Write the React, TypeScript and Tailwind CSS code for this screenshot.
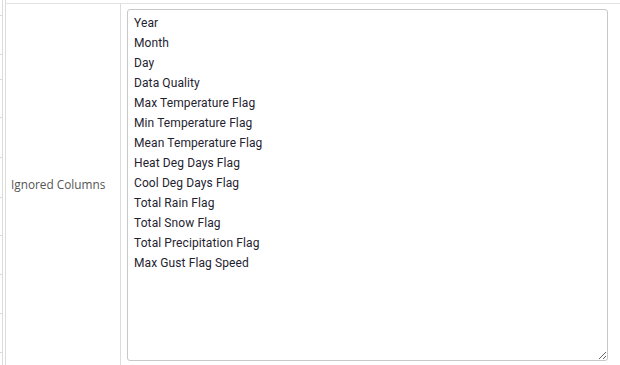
import React from 'react';

const ignored = [
  'Year',
  'Month',
  'Day',
  'Data Quality',
  'Max Temperature Flag',
  'Min Temperature Flag',
  'Mean Temperature Flag',
  'Heat Deg Days Flag',
  'Cool Deg Days Flag',
  'Total Rain Flag',
  'Total Snow Flag',
  'Total Precipitation Flag',
  'Max Gust Flag Speed',
];

// row heights of the neighbouring (cut off) column on the far left
const stubRows = [16, 39, 25, 38, 40, 40, 38, 39, 39, 39];

export default function App() {
  return (
    <div className="flex h-[365px] w-[620px] overflow-hidden bg-white font-['Roboto',sans-serif]">
      {/* cut-off column on the left */}
      <div className="w-[3px] shrink-0 border-r border-[#dcdcdc]">
        {stubRows.map((h, i) => (
          <div key={i} className="border-b border-[#dcdcdc]" style={{ height: h }} />
        ))}
      </div>

      <div className="ml-[2px] flex-1 border-l border-[#dcdcdc] pt-[3px]">
        <div className="flex h-full border-t border-[#e3e3e3]">
          <div className="flex w-[115px] shrink-0 items-center border-r border-[#dcdcdc] pl-[5px] font-['Open_Sans',sans-serif] text-[11.8px] text-[#555]">
            Ignored Columns
          </div>
          <div className="flex-1 pl-[6px] pr-[12px] pt-[5px]">
            <textarea
              readOnly
              defaultValue={ignored.join('\n')}
              className="block h-[352px] w-full resize-y rounded-[3px] border border-[#c8c8c8] bg-white px-[6px] pt-[3px] text-[12px] leading-[20px] tracking-[0.1px] text-[#1f2330] outline-none font-['Roboto',sans-serif]"
            />
          </div>
        </div>
      </div>
    </div>
  );
}
